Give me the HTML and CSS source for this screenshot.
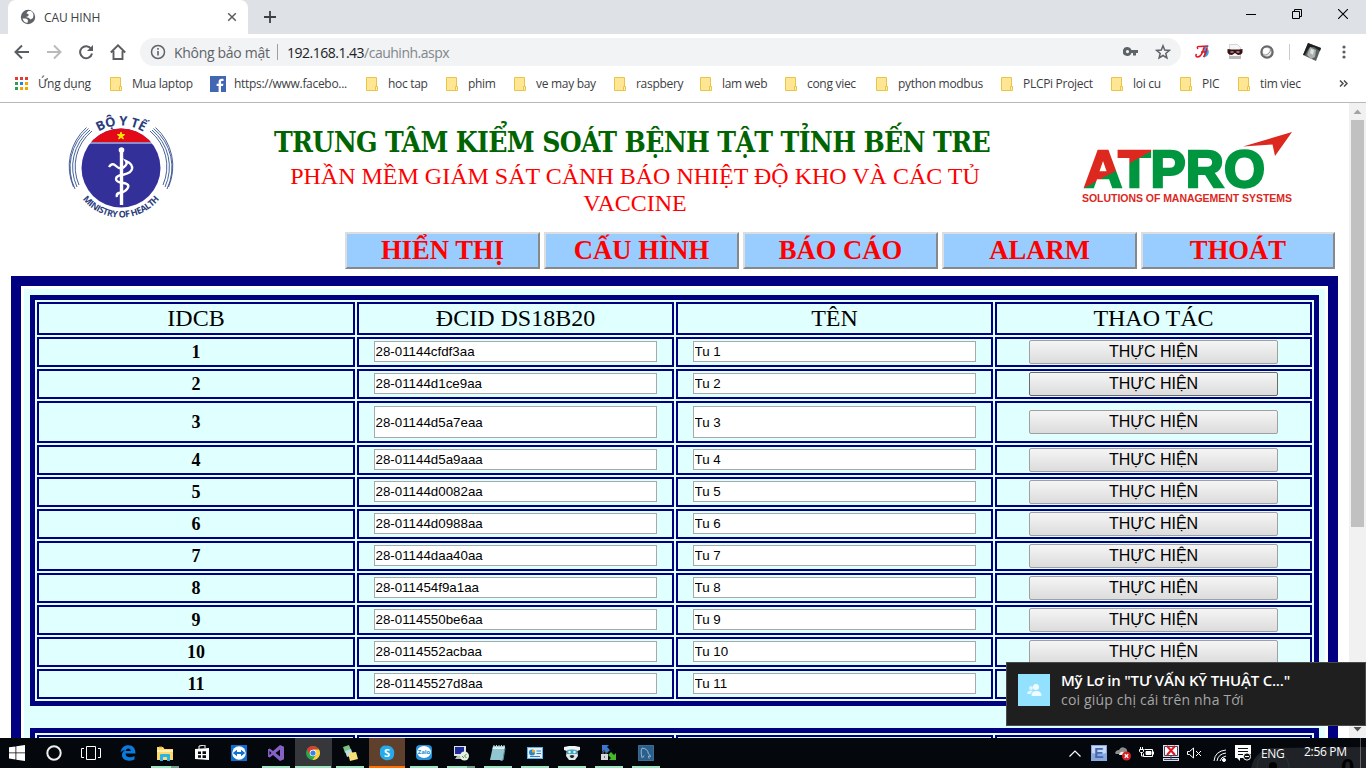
FILE: index.html
```html
<!DOCTYPE html>
<html lang="vi">
<head>
<meta charset="utf-8">
<title>CAU HINH</title>
<link rel="stylesheet" href="styles.css">
</head>
<body>
<svg class="defs" width="0" height="0">
  <symbol id="folder" viewBox="0 0 13 16"><path d="M.5 1.5h10v13H.5z" fill="#ffe694" stroke="#e9c545"/><path d="M9.5 10.5h2v4h-2z" fill="#fff0b5" stroke="#e9c545"/></symbol>
</svg>
<header class="tabs">
  <div class="tab">
    <svg width="16" height="16" viewBox="0 0 16 16"><circle cx="8" cy="8" r="7.200" fill="#5f6368"/><path d="M2.500 9.500l3.500 0 2 1.500-.5 3q-4-.5-5-4.500zM8.500 2q-2 1-2 2.500l2 .5 0 2-2.500 1 3 1 1.500 1.500 2.500-1.500q1.500-5-2-7z" fill="#fff"/></svg>
    <span>CAU HINH</span>
    <svg class="tab-x" width="10" height="10" viewBox="0 0 10 10"><path d="M1.200 1.200l7.600 7.600M8.800 1.200L1.200 8.800" stroke="#5a5d61" stroke-width="1.500"/></svg>
  </div>
  <svg class="plus" width="12" height="12" viewBox="0 0 12 12"><path d="M6 0v12M0 6h12" stroke="#3c4043" stroke-width="1.800"/></svg>
  <div class="winctl">
    <svg width="10" height="10"><path d="M0 5.500h10" stroke="#000"/></svg>
    <svg width="10" height="10" fill="none" stroke="#000"><path d="M.5 2.500h7v7h-7zM2.500 2.500v-2h7v7h-2"/></svg>
    <svg width="10" height="10"><path d="M0 0l10 10M10 0L0 10" stroke="#000" stroke-width="1.100"/></svg>
  </div>
</header>
<div class="toolbar">
  <svg class="nav-ic" width="16" height="16" fill="none" stroke="#5a5d61" stroke-width="2"><path d="M15 8H2M8 1.500L1.500 8 8 14.500"/></svg>
  <svg class="nav-ic" width="16" height="16" fill="none" stroke="#b9babc" stroke-width="2"><path d="M1 8h13M8 1.500L14.500 8 8 14.500"/></svg>
  <svg class="nav-ic" width="16" height="16"><path d="M13.200 5A6 6 0 1 0 14 9.500" fill="none" stroke="#5a5d61" stroke-width="2"/><path d="M15 1v6H9z" fill="#5a5d61"/></svg>
  <svg class="nav-ic" width="16" height="16"><path d="M.8 8.500L8 1.300l7.200 7.200M3.500 7v8h9V7" fill="none" stroke="#5a5d61" stroke-width="1.900"/></svg>
  <div class="omni">
    <svg width="16" height="16"><circle cx="8" cy="8" r="6.500" fill="none" stroke="#5f6368" stroke-width="1.500"/><path d="M8 7v4.500M8 4v1.800" stroke="#5f6368" stroke-width="1.600"/></svg>
    <span class="insecure">Không bảo mật</span><i></i><span class="url"><b>192.168.1.43</b>/cauhinh.aspx</span>
    <svg class="key" width="16" height="10"><path d="M4.500 0a4.500 4.500 0 1 0 4 6H10v2.500h3V6h2V3H8.500A4.500 4.500 0 0 0 4.500 0zm0 3a1.600 1.600 0 1 1 0 3.200 1.600 1.600 0 0 1 0-3.200z" fill="#5f6368" fill-rule="evenodd"/></svg>
    <svg width="16" height="16"><path d="M8 1.800l1.700 4.300 4.600.3-3.500 3 1.100 4.500L8 11.500l-3.900 2.400 1.100-4.500-3.500-3 4.600-.3z" fill="none" stroke="#5f6368" stroke-width="1.500"/></svg>
  </div>
  <div class="exts">
    <svg width="16" height="16"><path d="M9 3l5-1.500L12 5l1.500 1c1 4-1 6.500-4.500 7.500z" fill="#3d9ff0"/><path d="M3 5q-2-3 2-2.500l8-.5M9 3Q7 13 2.500 13q-2.500-.5-1-3M12 4q-1 6-3.500 9M6 8h5" fill="none" stroke="#e0171f" stroke-width="1.500"/></svg>
    <svg width="18" height="16"><path d="M3.500.5h8l3 3v11h-11z" fill="#f6f6f6" stroke="#d4d4d4"/><path d="M3 12h12v3H3z" fill="#bbb"/><path d="M1.500 5q7.500 1 15 0v3.500q-1 2.500-4.500 2.500l-3-2-3 2q-3.500 0-4.500-2.500z" fill="#3a1014"/><path d="M4.500 8h3M10.500 8h3" stroke="#ddd" stroke-width="1.200"/></svg>
    <svg width="16" height="16"><circle cx="8" cy="8" r="5.600" fill="#e6e6e6" stroke="#686868" stroke-width="2.300"/><circle cx="7" cy="7" r="3" fill="#fff"/><path d="M4 11q6 1 8-6" stroke="#999" fill="none"/></svg>
    <i></i>
    <svg width="20" height="20"><path d="M6 1l13 5-5 13L1 13z" fill="#59605d"/><path d="M8 5l6 3-1 7-4 2-4-4z" fill="#a9b0ae"/><path d="M9 7l3 1-1 5-3-2z" fill="#dfe3e1"/><path d="M6 1l13 5-1 3-6-4-4 0-3 4-2 4-2 0z" fill="#1d201f"/></svg>
    <svg width="4" height="16" fill="#5a5d61"><circle cx="2" cy="3" r="1.600"/><circle cx="2" cy="8" r="1.600"/><circle cx="2" cy="13" r="1.600"/></svg>
  </div>
</div>
<nav class="bookmarks">
  <span><svg class="apps" width="13" height="13"><path d="M0 0h3v3H0zM5 0h3v3H5zM10 0h3v3h-3z" fill="#e53935"/><path d="M0 5h3v3H0zM0 10h3v3H0z" fill="#2e9e4f"/><path d="M5 5h3v3H5z" fill="#1e88e5"/><path d="M10 5h3v3h-3zM5 10h3v3H5zM10 10h3v3h-3z" fill="#f5a300"/></svg>Ứng dụng</span>
  <span><svg class="fd"><use href="#folder"/></svg>Mua laptop</span>
  <span class="fb"><svg width="16" height="16"><path d="M0 0h16v16H0z" fill="#4267b2"/><path d="M11 16v-6h2l.4-2.300H11V6.200c0-.8.300-1.200 1.300-1.200h1.200V3c-3-.5-4.900.4-4.900 2.800v1.900h-2V10h2v6z" fill="#fff"/></svg>https://www.facebo...</span>
  <span><svg class="fd"><use href="#folder"/></svg>hoc tap</span>
  <span><svg class="fd"><use href="#folder"/></svg>phim</span>
  <span><svg class="fd"><use href="#folder"/></svg>ve may bay</span>
  <span><svg class="fd"><use href="#folder"/></svg>raspbery</span>
  <span><svg class="fd"><use href="#folder"/></svg>lam web</span>
  <span><svg class="fd"><use href="#folder"/></svg>cong viec</span>
  <span><svg class="fd"><use href="#folder"/></svg>python modbus</span>
  <span><svg class="fd"><use href="#folder"/></svg>PLCPi Project</span>
  <span><svg class="fd"><use href="#folder"/></svg>loi cu</span>
  <span><svg class="fd"><use href="#folder"/></svg>PIC</span>
  <span><svg class="fd"><use href="#folder"/></svg>tim viec</span>
  <svg class="more" width="9" height="7"><path d="M1 .5l3 3-3 3M5 .5l3 3-3 3" fill="none" stroke="#4a4d51" stroke-width="1.500"/></svg>
</nav>
<div class="viewport">
<main class="page">
  <div class="head">
    <svg class="moh" width="120" height="120" viewBox="0 0 120 120">
      <defs><clipPath id="disc"><circle cx="61" cy="62" r="39.500"/></clipPath><path id="top" d="M18.500 62a42.500 42.500 0 0 1 85 0"/><path id="bot" d="M11.500 62a49.500 49.500 0 0 0 99 0"/></defs>
      <g clip-path="url(#disc)"><path d="M20 20h82v84H20z" fill="#34309a"/><path d="M20 20h82v16H20z" fill="#e20a18"/><path d="M20 37h82" stroke="#fff" stroke-width=".9"/></g>
      <path d="M61 26l.9 2.600h2.800l-2.200 1.700.8 2.700-2.300-1.600-2.300 1.600.8-2.700-2.200-1.700h2.800z" fill="#ffe600" stroke="#ffe600"/>
      <path d="M61.500 45v54" stroke="#fff" stroke-width="3.400"/><circle cx="61.500" cy="44" r="2.800" fill="#fff"/>
      <path d="M49 61q3-5 7-1 4 4 8 1 4-3 2-6 7 3 6 8-1 4-8 5.500-8 1-8 4.500 0 3 7 4 8 1 4 6-2 3-8 4-3 1-2 4" fill="none" stroke="#fff" stroke-width="2.400"/>
      <g fill="none" stroke="#34508f" stroke-width=".9"><path id="l" d="M32 25A46 46 0 0 0 19 79M30 24A48 48 0 0 0 17 81M28.500 22.500A50 50 0 0 0 15 83M26.500 21.500A52 52 0 0 0 13.500 81"/><use href="#l" transform="matrix(-1 0 0 1 122 0)"/></g>
      <text class="moh-top"><textPath href="#top" startOffset="50%" text-anchor="middle" textLength="47">BỘ Y TẾ</textPath></text>
      <text class="moh-bot"><textPath href="#bot" startOffset="50%" text-anchor="middle" textLength="88">MINISTRY OF HEALTH</textPath></text>
    </svg>
    <div class="titles">
      <h1>TRUNG TÂM KIỂM SOÁT BỆNH TẬT TỈNH BẾN TRE</h1>
      <p>PHẦN MỀM GIÁM SÁT CẢNH BÁO NHIỆT ĐỘ KHO VÀ CÁC TỦ VACCINE</p>
    </div>
    <svg class="atpro" width="230" height="100" viewBox="0 0 230 100">
      <defs><linearGradient id="ag" gradientUnits="userSpaceOnUse" x1="24" y1="5.700" x2="72" y2="93.300"><stop offset=".5" stop-color="#dc281e"/><stop offset=".5" stop-color="#00963f"/></linearGradient></defs>
      <text class="at" x="14" y="67.300" textLength="181" lengthAdjust="spacingAndGlyphs" fill="url(#ag)" stroke="url(#ag)">ATPRO</text>
      <path d="M173 26.500L222 12l-17 24-2.500-11.500z" fill="#dc281e"/>
      <text class="sol" x="12" y="81.700" textLength="210">SOLUTIONS OF MANAGEMENT SYSTEMS</text>
    </svg>
  </div>
  <div class="menu"><button>HIỂN THỊ</button><button>CẤU HÌNH</button><button>BÁO CÁO</button><button>ALARM</button><button>THOÁT</button></div>
  <div class="frame"><div class="panel">
    <table class="grid">
      <colgroup><col class="first"><col><col><col></colgroup>
      <tr class="th"><td>IDCB</td><td>ĐCID DS18B20</td><td>TÊN</td><td>THAO TÁC</td></tr>
      <tr><td>1</td><td><input value="28-01144cfdf3aa"></td><td><input value="Tu 1"></td><td><button>THỰC HIỆN</button></td></tr>
      <tr><td>2</td><td><input value="28-01144d1ce9aa"></td><td><input value="Tu 2"></td><td><button class="focus">THỰC HIỆN</button></td></tr>
      <tr class="tall"><td>3</td><td><input value="28-01144d5a7eaa"></td><td><input value="Tu 3"></td><td><button>THỰC HIỆN</button></td></tr>
      <tr><td>4</td><td><input value="28-01144d5a9aaa"></td><td><input value="Tu 4"></td><td><button>THỰC HIỆN</button></td></tr>
      <tr><td>5</td><td><input value="28-01144d0082aa"></td><td><input value="Tu 5"></td><td><button>THỰC HIỆN</button></td></tr>
      <tr><td>6</td><td><input value="28-01144d0988aa"></td><td><input value="Tu 6"></td><td><button>THỰC HIỆN</button></td></tr>
      <tr><td>7</td><td><input value="28-01144daa40aa"></td><td><input value="Tu 7"></td><td><button>THỰC HIỆN</button></td></tr>
      <tr><td>8</td><td><input value="28-011454f9a1aa"></td><td><input value="Tu 8"></td><td><button>THỰC HIỆN</button></td></tr>
      <tr><td>9</td><td><input value="28-0114550be6aa"></td><td><input value="Tu 9"></td><td><button>THỰC HIỆN</button></td></tr>
      <tr><td>10</td><td><input value="28-0114552acbaa"></td><td><input value="Tu 10"></td><td><button>THỰC HIỆN</button></td></tr>
      <tr><td>11</td><td><input value="28-01145527d8aa"></td><td><input value="Tu 11"></td><td></td></tr>
    </table>
    <table class="grid next"><colgroup><col class="first"><col><col><col></colgroup><tr class="th"><td></td><td></td><td></td><td></td></tr></table>
  </div></div>
</main>
<div class="scroll">
  <svg width="17" height="17"><path d="M4.500 11h8l-4-4.500z" fill="#a3a3a3"/></svg>
  <div class="thumb"></div>
  <svg width="17" height="17"><path d="M4.500 6h8l-4 4.500z" fill="#505050"/></svg>
</div>
</div>
<footer class="taskbar">
  <div class="apps-row">
    <span><svg width="16" height="16" fill="#fff"><path d="M0 2.300L6.500 1.400v6.100H0zM7.300 1.300L16 0v7.500H7.300zM0 8.300h6.500v6.200L0 13.600zM7.300 8.300H16V16l-8.700-1.300z"/></svg></span>
    <span><svg width="16" height="16"><circle cx="8" cy="8" r="6.700" fill="none" stroke="#eee" stroke-width="2"/></svg></span>
    <span><svg width="20" height="14" fill="none" stroke="#fff"><path d="M5.500.5h9v13h-9zM3 2.500H.5v9H3M17 2.500h2.500v9H17"/></svg></span>
    <span><svg width="16" height="16"><path d="M.5 7.500C1.500 2 5 .3 8.500.3c4.500 0 7 3 7 8.200H5.500c.2 4 5 5 9 2.500v3.500C8 17.500 1.500 15 2 9.500c.2-2 1.500-3.500 3-4.500-1.800.3-3.300 1-4.500 2.500zM5.700 6h5.100c0-3.500-5-3.500-5.100 0z" fill="#0a7bdc"/></svg></span>
    <span class="open stack"><svg width="16" height="15"><path d="M0 1h6l1.500 2H16v11H0z" fill="#ffd96b"/><path d="M0 4h16v2H0z" fill="#fff0b0"/><path d="M2 1h3" stroke="#d99b18"/><path d="M3 15V9q0-1 1-1h8q1 0 1 1v6h-3v-4H6v4z" fill="#28b4e8"/></svg></span>
    <span><svg width="14" height="16"><path d="M0 4l14-1v12L0 14z" fill="#fff"/><path d="M4 4V1l6-1v3" stroke="#fff" fill="none"/><path d="M3 6.500h3v2.500H3zM7.500 6.300H11V9H7.500zM3 10.300h3v2.500H3zM7.500 10.300H11V13H7.500z" fill="#080b10"/></svg></span>
    <span><svg width="16" height="16"><path d="M0 0h16v16H0z" fill="#0f6fd1"/><circle cx="8" cy="8" r="6.800" fill="#fff"/><path d="M1.800 8L6 4.800V7h4V4.800L14.200 8 10 11.200V9H6v2.200z" fill="#0f6fd1"/></svg></span>
    <span class="open"><svg width="16" height="16"><path d="M12 0l4 1.800v12.400L12 16 5 10 1.800 12.600 0 11.800V4.200l1.800-.8L5 6zM12 4.500L7.500 8l4.500 3.500zM1.500 6v4l2-2z" fill="#8661c5" fill-rule="evenodd"/></svg></span>
    <span class="open active"><svg width="14" height="14" viewBox="0 0 14 14"><circle cx="7" cy="7" r="7" fill="#29a84b"/><path d="M1 3.400A7 7 0 0 1 13 3.500L7 3.600 4 8.700z" fill="#e23b2f"/><path d="M13 3.500A7 7 0 0 1 6.500 14L10 8.700 7 3.600z" fill="#fdd03b"/><circle cx="7" cy="7" r="3.300" fill="#fff"/><circle cx="7" cy="7" r="2.600" fill="#3b7fe8"/></svg></span>
    <span class="open"><svg width="16" height="16"><path d="M1 2l6-2 2 5-6 3z" fill="#7ac37c"/><path d="M3 6l6-2 2 6-6 2z" fill="#b7dcf0"/><path d="M6 8l8-1 2 7-8 2z" fill="#f8df75"/></svg></span>
    <span class="skype"><svg width="16" height="16"><path d="M1 5a5 5 0 0 1 6-4.300A7 7 0 0 1 15 9.500 5 5 0 0 1 9.500 15 7 7 0 0 1 1 7z" fill="#27aaea"/><text x="8" y="12" class="sk">S</text></svg></span>
    <span class="open"><svg width="16" height="16"><rect width="16" height="15" rx="4" fill="#2594d8"/><ellipse cx="8" cy="7" rx="7" ry="6" fill="#fff"/><text x="8" y="9" class="zl">Zalo</text></svg></span>
    <span class="open stack"><svg width="16" height="16"><path d="M1 1h12v10H1z" fill="#dfe3e6"/><path d="M2 2h9v7H2z" fill="#1c2a9a"/><path d="M4 11h5v3H2z" fill="#b9bdbf"/><circle cx="11.500" cy="11" r="4.500" fill="#e8efe4"/><path d="M9 11l2 2M13.500 9l-2 2 2 2" stroke="#46983c" fill="none"/></svg></span>
    <span class="open"><svg width="16" height="16"><path d="M3 1h12l-2 14H0z" fill="#92c5d0"/><path d="M3 2h12l-.3 2H2.600z" fill="#e4f1f3"/><path d="M4 0v3M6.500 0v3M9 0v3M11.500 0v3M14 0v3" stroke="#c6d9dd"/><path d="M15 3l-2 12-3 1" stroke="#5b919d" fill="none"/></svg></span>
    <span class="open"><svg width="16" height="12"><path d="M0 0h16v12H0z" fill="#55b4e6"/><path d="M1 1h14v10H1z" fill="#dff1fb"/><circle cx="5" cy="5.500" r="3" fill="#2c84c9"/><path d="M5 5.500V2.500a3 3 0 0 1 3 3z" fill="#f3a326"/><path d="M9.500 4H14M9.500 6.500H14M3 9.500h10" stroke="#347fbd"/></svg></span>
    <span class="open"><svg width="16" height="16"><path d="M0 2l5-1h6l5 1v3l-3 1H3L0 5z" fill="#f2f5f5"/><path d="M3 4h10l1 7-3 4H5l-3-4z" fill="#e2e7e8"/><path d="M3 5.500q5-2 10 0V9H3z" fill="#3ba8c8"/><circle cx="5.500" cy="7" r="1.200" fill="#fff"/><circle cx="10.500" cy="7" r="1.200" fill="#fff"/><path d="M5.500 11q2.500-2 5 0l-1.500 2H7z" fill="#202a2d"/></svg></span>
    <span class="open"><svg width="16" height="16"><path d="M1 0h7L6 2l3 3-3 3-3-3-2 2z" fill="#3978ce"/><path d="M15 15H8l2-2-3-3 3-3 3 3 2-2z" fill="#46b82e"/><path d="M0 9h7v6H0z" fill="#d7dadd"/><path d="M2 9V7q1.500-2 3 0v2M3.500 11v2" stroke="#777" fill="none"/></svg></span>
    <span class="open"><svg width="20" height="20" viewBox="-2 -2 20 20"><path d="M-1.500-1.500h19v19h-19z" fill="#2a5f8c" stroke="#4f7fa6"/><path d="M3 14Q1 5 3 2q7 0 8 7l3 3-3 0 1 3M4 14q0-2 2-3" fill="none" stroke="#b7d2e5"/></svg></span>
  </div>
  <div class="tray">
    <svg width="12" height="7"><path d="M.5 6.500L6 1l5.500 5.500" stroke="#fff" fill="none" stroke-width="1.200"/></svg>
    <svg width="16" height="16"><path d="M0 0h16v16H0z" fill="#87a9df"/><path d="M1 1h14v7q-7 2-14 0z" fill="#c7daf5"/><text x="8" y="13" class="ee">E</text></svg>
    <svg width="16" height="16"><path d="M0 8q1-3 4-3 2-4 6-2 3 1 2 6H1z" fill="#8d8d8d"/><path d="M4 10q1-4 5-3l3 3z" fill="#eee"/><circle cx="11.500" cy="11" r="4.500" fill="#d61f26"/><path d="M9.800 9.300l3.400 3.400M13.200 9.300l-3.400 3.400" stroke="#fff" stroke-width="1.300"/></svg>
    <svg width="16" height="16" fill="none" stroke="#fff"><path d="M5.500 4.500h8v7h-9v-3M14.500 6.500v3M1.500 2v2M3.500 2v2M.5 4.500h4v2l-1 1h-2l-1-1zM2.500 8v3h2"/><path d="M7 6.500h5v3H7z" fill="#fff"/></svg>
    <svg width="16" height="16"><path d="M0 0h16v12H0zM0 13h16v3H0z" fill="#d8dde8"/><path d="M1.500 1.500h13v9h-13z" fill="#fff" stroke="#3c4668"/><path d="M4 1l8 9M12 1l-8 9" stroke="#e1171e" stroke-width="2"/><path d="M8 11v3M1 14.500h14" stroke="#3c4668"/></svg>
    <svg width="16" height="14" fill="none" stroke="#fff"><path d="M.5 5.500h2L6.500 2v10l-4-3.500h-2zM9 5l5 5M14 5l-5 5"/></svg>
    <svg class="wifi" width="14" height="14" fill="none" stroke="#fff"><path d="M1 13Q2 3 13 2M4 13Q5 6 13 5M7 13Q8 9 13 8"/><circle cx="11" cy="12" r="1.500" fill="#fff"/></svg>
    <svg width="16" height="16"><path d="M0 0h16v9h-5v4H5v3l-3-3H0z" fill="#fff"/><path d="M3 3.500h10M3 6.500h10M3 9.500h5" stroke="#111"/><circle cx="12" cy="11.500" r="3.600" fill="#111" stroke="#fff"/><path d="M10 11.500h4" stroke="#fff"/></svg>
    <span class="lang">ENG</span><span class="time">2:56 PM</span>
  </div>
  <svg class="watermark" width="115" height="21"><path d="M0 21Q3 6 18 1l97-1v21z" fill="#fff" opacity=".11"/><circle cx="22" cy="20" r="16" fill="none" stroke="#555" opacity=".3"/><circle cx="22" cy="19" r="4" fill="#000"/><text x="90" y="29">0</text></svg>
</footer>
<aside class="toast">
  <div class="avatar"><svg width="15" height="12" fill="#f2fbff"><circle cx="4" cy="4" r="2" opacity=".8"/><path d="M0 10q0-3.500 4-3.500 1 0 2 .5-2 1-2 3z" opacity=".8"/><circle cx="9" cy="3" r="3"/><path d="M4.500 12q0-5 5-5t5 5z"/></svg></div>
  <div><strong>Mỹ Lơ in "TƯ VẤN KỸ THUẬT C..."</strong><p>coi giúp chị cái trên nha Tới</p></div>
</aside>
</body>
</html>
```
FILE: styles.css
```css
* { box-sizing: border-box; }
body { margin: 0; width: 1366px; height: 768px; overflow: hidden; display: flex; flex-direction: column; background: #fff; font-family: "Open Sans", "Noto Sans", sans-serif; }
svg { display: block; flex: none; }
svg.defs { position: absolute; }

/* browser chrome */
.tabs { height: 34px; flex: none; display: flex; background: #dee1e6; padding-left: 8px; }
.tab { width: 240px; height: 34px; background: #fff; border-radius: 8px 8px 0 0; display: flex; align-items: center; padding: 0 11px 0 12px; font-size: 12px; letter-spacing: -0.1px; color: #3c4043; }
.tab span { margin-left: 8px; flex: 1; }
.plus { margin: 11px 0 0 16px; }
.winctl { margin: 9px 18px 0 auto; display: flex; gap: 36px; }
.toolbar { height: 36px; flex: none; display: flex; align-items: center; padding-left: 14px; }
.nav-ic { margin-right: 16px; }
.omni { width: 1041px; height: 28px; margin-left: -2px; border-radius: 14px; background: #f1f3f4; display: flex; align-items: center; padding: 0 10px; font-size: 14px; color: #5f6368; }
.insecure { margin-left: 8px; width: 96px; white-space: nowrap; letter-spacing: -0.3px; }
.omni i { width: 1px; height: 16px; background: #9aa0a6; margin: 0 9px 0 7px; }
.url { flex: 1; color: #80868b; letter-spacing: -0.5px; }
.url b { font-weight: 400; color: #202124; }
.key { margin-right: 16px; }
.exts { flex: 1; display: flex; align-items: center; padding-left: 14px; }
.exts svg { margin-right: 16px; }
.exts svg:nth-child(2) { margin: 0 15px 0 -1px; }
.exts i { width: 1px; height: 16px; background: #c8cacd; margin: 0 12px 0 -2px; }
.exts svg:nth-child(5) { margin-right: 12px; }
.exts svg:last-child { margin: 0 0 0 8px; }
.bookmarks { height: 33px; flex: none; border-bottom: 1px solid #b6b8ba; display: grid; align-items: center; padding: 0 0 5px 15px; grid-template-columns: 95px 100px 156px 80px 68px 100px 86px 85px 91px 125px 110px 69px 58px 101px auto; font-size: 12px; color: #3c4043; }
.bookmarks span { display: flex; align-items: center; white-space: nowrap; letter-spacing: -0.3px; }
.bookmarks span:first-child { letter-spacing: -0.25px; }
.apps { margin-right: 10px; }
.fd { width: 13px; height: 16px; margin-right: 9px; }
.fb svg { margin-right: 8px; }

/* page */
.viewport { height: 635px; flex: none; display: flex; overflow: hidden; }
.page { width: 1349px; height: 635px; overflow: hidden; font-family: "Liberation Serif", serif; }
.head { height: 129px; display: flex; }
.moh { margin: 3px 0 0 60px; }
.moh-top, .moh-bot { font-family: "Open Sans", sans-serif; fill: #2c3d7c; }
.moh-top { font-size: 13px; font-weight: 700; }
.moh-bot { font-size: 9px; font-weight: 700; }
.titles { width: 740px; margin: 21px 0 0 85px; text-align: center; }
.titles h1 { margin: 0 0 0 -6px; font: 700 28px/38px "DejaVu Serif Condensed", "DejaVu Serif", serif; letter-spacing: -0.65px; color: #006400; white-space: nowrap; }
.titles p { margin: 1px 0 0; font-size: 24px; line-height: 27px; color: #f00; }
.atpro { margin: 17px 0 0 65px; }
.at { font: 700 51.500px "Liberation Sans", sans-serif; stroke-width: 2.4px; }
.sol { font: 700 10.500px "Liberation Sans", sans-serif; fill: #dc281e; }
.menu { display: flex; gap: 4px; padding-left: 345px; }
.menu button { width: 195px; height: 37px; padding: 0 0 2px; border: 2px solid; border-color: #ddd #888 #888 #ddd; background: #9cf; color: #f00; font: 700 26.667px/30px "Liberation Serif", serif; }
.menu button:last-child { width: 194px; }
.frame { width: 1327px; margin: 7px 0 0 11px; border: 10px solid navy; padding: 3px; }
.panel { background: #e0ffff; padding: 6px; }
.grid { width: 1289px; table-layout: fixed; border: 5px solid navy; border-spacing: 2px; }
.grid .first { width: 318px; }
.grid td { height: 30px; padding: 0; border: 2px solid navy; text-align: center; font-size: 18px; line-height: 20px; font-weight: 700; }
.grid .th td { height: 33px; font-size: 24px; line-height: 27px; font-weight: 400; }
.grid .tall td { height: 42px; }
.grid input { display: block; width: 283px; height: 21px; margin: -1px 0 0 15px; padding: 0 1px 0 0.5px; border: 1px solid #a9a9a9; background: #fff; color: #000; font: 13.333px "Liberation Sans", sans-serif; }
.grid .tall input { height: 32px; margin-top: 0; }
.grid button { display: block; width: 249px; height: 24px; margin: 0 auto; padding: 0; border: 1px solid #a0a0a0; border-radius: 2px; background: linear-gradient(#f5f5f5, #dcdcdc); color: #000; font: 16px/20px "Liberation Sans", sans-serif; }
.grid button.focus { border-color: #6b6b6b; }
.next { margin-top: 22px; }
.scroll { width: 17px; background: #f1f1f1; display: flex; flex-direction: column; }
.thumb { width: 13px; height: 407px; margin: 0 0 auto 2px; background: #c1c1c1; }

/* taskbar */
.taskbar { position: relative; height: 30px; flex: none; display: flex; justify-content: space-between; background: #04070c; color: #fff; }
.apps-row { display: flex; margin-left: -1px; }
.apps-row span { width: 37px; height: 30px; display: flex; align-items: center; justify-content: center; padding-right: 1px; }
.apps-row .open { background: linear-gradient(#9ee6c2, #9ee6c2) 4px 28px / 28px 2px no-repeat; }
.apps-row .stack { background: linear-gradient(90deg, #9ee6c2 20px, #6f9f8a 20px) 4px 28px / 28px 2px no-repeat; }
.apps-row .active { background: linear-gradient(90deg, #9ee6c2, #9ee6c2) 0 28px / 36px 2px no-repeat, #35373b; }
.apps-row .skype { background: linear-gradient(#ff7200, #ff7200) 0 28px / 36px 2px no-repeat, linear-gradient(#5e402d, #5e402d) 0 0 / 36px 30px no-repeat; }
.apps-row span:last-child svg { width: 16px; height: 16px; }
.sk { font: 700 11px "Open Sans", sans-serif; fill: #fff; text-anchor: middle; }
.zl { font: 700 6px "Open Sans", sans-serif; fill: #168bd2; text-anchor: middle; }
.ee { font: 700 14px "Liberation Sans", sans-serif; fill: #4868b0; text-anchor: middle; }
.tray { display: flex; align-items: center; gap: 8px; width: 297px; font-size: 12px; }
.tray svg:first-child { margin-right: 2px; }
.wifi { margin: 3px 0 0 2px; }
.lang { margin-left: 2px; width: 24px; letter-spacing: -0.3px; }
.time { margin-left: 11px; padding-right: 13px; border-right: 1px solid #555; line-height: 28px; padding-bottom: 2px; white-space: nowrap; letter-spacing: -0.3px; }
.watermark { position: absolute; right: 0; bottom: 0; font: 700 24px "Liberation Sans", sans-serif; pointer-events: none; }

.toast { position: absolute; left: 1006px; top: 662px; width: 360px; height: 64px; display: flex; gap: 11px; padding: 11px; background: #1f1f1f; border: 1px solid #4a4a4a; color: #fff; font-size: 14px; line-height: 20px; }
.avatar { width: 32px; height: 32px; background: #92e1ff; display: flex; align-items: center; justify-content: center; }
.toast strong { display: block; margin-top: -4px; font-size: 15px; font-weight: 600; letter-spacing: -0.2px; white-space: nowrap; }
.toast p { margin: 0; color: #a6a6a6; letter-spacing: 0.18px; }
```
